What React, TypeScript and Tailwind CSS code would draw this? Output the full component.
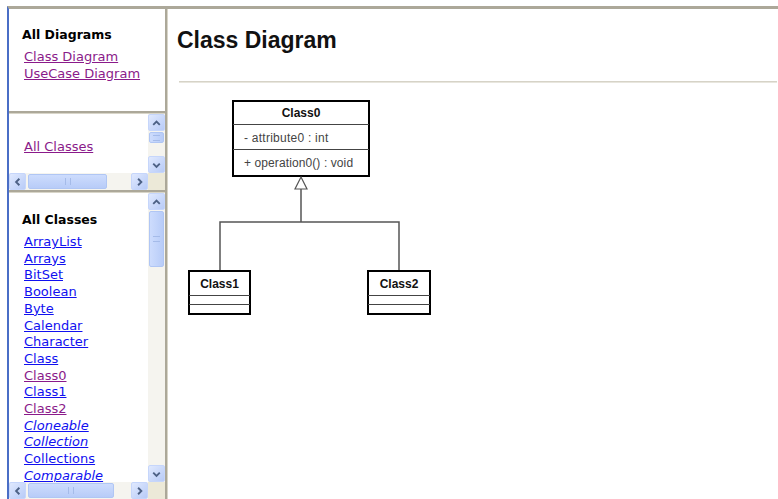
import React from "react";

const linkFont = "font-['DejaVu_Sans',sans-serif] text-[13px] leading-[16.7px] underline pl-[2px]";
const headFont = "font-['DejaVu_Sans',sans-serif] text-[12.5px] font-bold leading-[17px] text-black";
const blue = "text-[#1010f0]";
const purple = "text-[#8a1a8a]";

const classes = [
  { name: "ArrayList" },
  { name: "Arrays" },
  { name: "BitSet" },
  { name: "Boolean" },
  { name: "Byte" },
  { name: "Calendar" },
  { name: "Character" },
  { name: "Class" },
  { name: "Class0", visited: true },
  { name: "Class1" },
  { name: "Class2", visited: true },
  { name: "Cloneable", italic: true },
  { name: "Collection", italic: true },
  { name: "Collections" },
  { name: "Comparable", italic: true },
];

function Arrow({ dir }: { dir: "up" | "down" | "left" | "right" }) {
  const d = {
    up: "M4.5 10 L8 6.5 L11.5 10",
    down: "M4.5 6.5 L8 10 L11.5 6.5",
    left: "M10 4.5 L6.5 8 L10 11.5",
    right: "M6.5 4.5 L10 8 L6.5 11.5",
  }[dir];
  return (
    <svg width="16" height="16" viewBox="0 0 16 16">
      <path d={d} fill="none" stroke="#4d6185" strokeWidth="2" />
    </svg>
  );
}

function Btn({ dir }: { dir: "up" | "down" | "left" | "right" }) {
  return (
    <div className="w-[17px] h-[17px] shrink-0 flex items-center justify-center rounded-[2px] border border-[#c6d6fb] bg-gradient-to-br from-[#e0e9fe] to-[#b8cbf7]">
      <Arrow dir={dir} />
    </div>
  );
}

function VScroll({ thumbTop, thumbH }: { thumbTop: number; thumbH: number }) {
  return (
    <div className="w-[17px] h-full shrink-0 flex flex-col bg-[#f5f4ef]">
      <Btn dir="up" />
      <div className="flex-1 overflow-hidden">
        <div
          className="mx-[1px] rounded-[2px] border border-[#b0c6f4] bg-gradient-to-r from-[#cddcfd] to-[#b8ccf8] flex items-center justify-center"
          style={{ marginTop: thumbTop, height: thumbH }}
        >
          <div className="w-[7px] h-[6px] border-y border-[#a5bbe9]" />
        </div>
      </div>
      <Btn dir="down" />
    </div>
  );
}

function HScroll({ thumbLeft, thumbW }: { thumbLeft: number; thumbW: number }) {
  return (
    <div className="h-[17px] w-full flex bg-[#f5f4ef]">
      <Btn dir="left" />
      <div className="flex-1 overflow-hidden flex">
        <div
          className="my-[1px] rounded-[2px] border border-[#b0c6f4] bg-gradient-to-b from-[#cddcfd] to-[#b8ccf8] flex items-center justify-center shrink-0"
          style={{ marginLeft: thumbLeft, width: thumbW }}
        >
          <div className="w-[6px] h-[7px] border-x border-[#a5bbe9]" />
        </div>
      </div>
      <Btn dir="right" />
    </div>
  );
}

function Diagram() {
  const box = { fill: "#fff", stroke: "#000", strokeWidth: 2 };
  const sep = { stroke: "#444", strokeWidth: 1 };
  const line = { stroke: "#555", strokeWidth: 1.5, fill: "none" };
  return (
    <svg width="260" height="232" viewBox="0 0 260 232" className="block">
      <g fontFamily="'Liberation Sans', Arial, sans-serif">
        {/* Class0 */}
        <rect x="54" y="11" width="136" height="75" {...box} />
        <line x1="54" y1="34.5" x2="190" y2="34.5" {...sep} />
        <line x1="54" y1="59.5" x2="190" y2="59.5" {...sep} />
        <text x="122" y="27" textAnchor="middle" fontSize="12" fontWeight="bold" fill="#111">Class0</text>
        <text x="65" y="52" fontSize="12" letterSpacing="0.25" fill="#444">- attribute0 : int</text>
        <text x="65" y="77" fontSize="12" letterSpacing="0.1" fill="#444">+ operation0() : void</text>

        {/* generalization */}
        <path d="M122 87 L128 99 L116 99 Z" fill="#fff" stroke="#555" strokeWidth="1.2" />
        <path d="M122 99 V132 M41 180 V132 H220 V180" {...line} />

        {/* Class1 */}
        <rect x="10" y="181" width="61" height="43" {...box} />
        <line x1="10" y1="205.5" x2="71" y2="205.5" {...sep} />
        <line x1="10" y1="214.5" x2="71" y2="214.5" {...sep} />
        <text x="40.5" y="198" textAnchor="middle" fontSize="12" fontWeight="bold" fill="#111">Class1</text>

        {/* Class2 */}
        <rect x="189" y="181" width="62" height="43" {...box} />
        <line x1="189" y1="205.5" x2="251" y2="205.5" {...sep} />
        <line x1="189" y1="214.5" x2="251" y2="214.5" {...sep} />
        <text x="220" y="198" textAnchor="middle" fontSize="12" fontWeight="bold" fill="#111">Class2</text>
      </g>
    </svg>
  );
}

export default function App() {
  return (
    <div className="w-[778px] h-[499px] bg-white pt-[6px] pl-[7px] overflow-hidden">
      <div className="flex h-full border-t-[3px] border-t-[#aca899] border-l-2 border-l-[#4a6ec6]">
        {/* left frames */}
        <div className="w-[156px] shrink-0 flex flex-col">
          <div className="h-[102px] pl-[13px] pt-[17px] bg-white">
            <div className={headFont}>All Diagrams</div>
            <div className="mt-[6px] flex flex-col items-start">
              <a className={`${linkFont} ${purple}`}>Class Diagram</a>
              <a className={`${linkFont} ${purple}`}>UseCase Diagram</a>
            </div>
          </div>
          <div className="h-[3px] bg-[#aca899] border-b border-b-[#d8d5c8]" />
          <div className="h-[76px] flex flex-col bg-white">
            <div className="flex flex-1 min-h-0">
              <div className="flex-1 pl-[13px] pt-[19px]">
                <a className={`${linkFont} ${purple}`}>All Classes</a>
              </div>
              <VScroll thumbTop={1} thumbH={11} />
            </div>
            <div className="flex">
              <div className="flex-1">
                <HScroll thumbLeft={2} thumbW={79} />
              </div>
              <div className="w-[17px] h-[17px] bg-[#ece9d8]" />
            </div>
          </div>
          <div className="h-[3px] bg-[#aca899] border-b border-b-[#d8d5c8]" />
          <div className="flex-1 min-h-0 flex flex-col bg-white">
            <div className="flex flex-1 min-h-0">
              <div className="flex-1 overflow-hidden pl-[13px] pt-[18px]">
                <div className={headFont}>All Classes</div>
                <div className="mt-[6px] flex flex-col items-start">
                  {classes.map((c) => (
                    <a
                      key={c.name}
                      className={`${linkFont} ${c.visited ? purple : blue} ${c.italic ? "italic" : ""}`}
                    >
                      {c.name}
                    </a>
                  ))}
                </div>
              </div>
              <VScroll thumbTop={1} thumbH={56} />
            </div>
            <div className="flex">
              <div className="flex-1">
                <HScroll thumbLeft={2} thumbW={86} />
              </div>
              <div className="w-[17px] h-[17px] bg-[#ece9d8]" />
            </div>
          </div>
        </div>

        <div className="w-[3px] shrink-0 bg-[#aca899] border-r border-r-[#d8d5c8]" />

        {/* right frame */}
        <div className="flex-1 bg-white pt-[17px]">
          <h1 className="pl-[9px] font-['Liberation_Sans',Arial,sans-serif] text-[23px] font-bold leading-[28px] text-[#111]">
            Class Diagram
          </h1>
          <div className="mt-[27px] ml-[11px] mr-[1px] h-[2px] bg-[#d6d3c7] border-b border-b-[#e8e6de]" />
          <div className="mt-[7px] ml-[11px]">
            <Diagram />
          </div>
        </div>
      </div>
    </div>
  );
}
